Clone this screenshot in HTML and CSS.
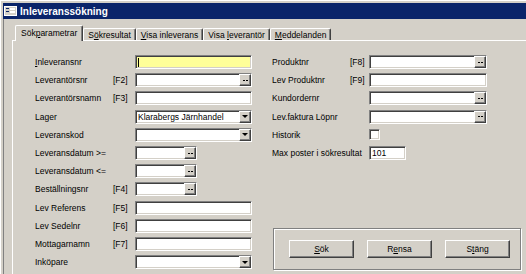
FILE: index.html
```html
<!DOCTYPE html>
<html lang="sv">
<head>
<meta charset="utf-8">
<title>Inleveranssökning</title>
<link rel="stylesheet" href="styles.css">
</head>
<body>
<div class="window">
  <div class="titlebar">
    <svg class="appicon" width="13" height="10" viewBox="0 0 13 10">
      <rect x="0.5" y="0.5" width="12" height="9" fill="#d4d0c8" stroke="#ffffff"/>
      <rect x="2" y="2" width="3" height="1" fill="#0a246a"/>
      <rect x="6" y="2" width="5" height="2" fill="#ffffff"/>
      <rect x="2" y="5" width="3" height="1" fill="#0a246a"/>
      <rect x="6" y="5" width="5" height="2" fill="#ffffff"/>
    </svg>
    <span class="title">Inleveranssökning</span>
  </div>
  <div class="client">
    <div class="tabs">
      <div class="tab active"><span>Sök<u>p</u>arametrar</span></div>
      <div class="tab"><span>S<u>ö</u>kresultat</span></div>
      <div class="tab"><span><u>V</u>isa inleverans</span></div>
      <div class="tab"><span>Visa <u>l</u>everantör</span></div>
      <div class="tab"><span><u>M</u>eddelanden</span></div>
    </div>
    <div class="panel">
      <div class="grid left">
        <span class="lbl"><u>I</u>nleveransnr</span><span class="fkey"></span>
        <div class="fld focus"><span class="caret"></span></div>

        <span class="lbl">Leverantörsnr</span><span class="fkey">[F2]</span>
        <div class="fld"><span class="sb dots"></span></div>

        <span class="lbl">Leverantörsnamn</span><span class="fkey">[F3]</span>
        <div class="fld"></div>

        <span class="lbl">Lager</span><span class="fkey"></span>
        <div class="fld"><span class="val">Klarabergs Järnhandel</span><span class="sb arrow"></span></div>

        <span class="lbl">Leveranskod</span><span class="fkey"></span>
        <div class="fld"><span class="sb arrow"></span></div>

        <span class="lbl">Leveransdatum &gt;=</span><span class="fkey"></span>
        <div class="fld short"><span class="sb dots"></span></div>

        <span class="lbl">Leveransdatum &lt;=</span><span class="fkey"></span>
        <div class="fld short"><span class="sb dots"></span></div>

        <span class="lbl">Beställningsnr</span><span class="fkey">[F4]</span>
        <div class="fld short"><span class="sb dots"></span></div>

        <span class="lbl">Lev Referens</span><span class="fkey">[F5]</span>
        <div class="fld"></div>

        <span class="lbl">Lev Sedelnr</span><span class="fkey">[F6]</span>
        <div class="fld"></div>

        <span class="lbl">Mottagarnamn</span><span class="fkey">[F7]</span>
        <div class="fld"></div>

        <span class="lbl">Inköpare</span><span class="fkey"></span>
        <div class="fld"><span class="sb arrow"></span></div>
      </div>

      <div class="rightcol">
        <div class="grid right">
          <span class="lbl">Produktnr</span><span class="fkey">[F8]</span>
          <div class="fld"><span class="sb dots"></span></div>

          <span class="lbl">Lev Produktnr</span><span class="fkey">[F9]</span>
          <div class="fld"></div>

          <span class="lbl">Kundordernr</span><span class="fkey"></span>
          <div class="fld"><span class="sb dots"></span></div>

          <span class="lbl">Lev.faktura Löpnr</span><span class="fkey"></span>
          <div class="fld"><span class="sb dots"></span></div>

          <span class="lbl">Historik</span><span class="fkey"></span>
          <div class="chk"></div>

          <span class="lbl">Max poster i sökresultat</span><span class="fkey"></span>
          <div class="fld max"><span class="val">101</span></div>
        </div>

        <div class="btnbox">
          <button class="btn" type="button"><u>S</u>ök</button>
          <button class="btn" type="button">R<u>e</u>nsa</button>
          <button class="btn" type="button">S<u>t</u>äng</button>
        </div>
      </div>
    </div>
  </div>
</div>
</body>
</html>
```

FILE: styles.css
```css
* {
  box-sizing: border-box;
}

html,
body {
  margin: 0;
  padding: 0;
}

body {
  width: 526px;
  height: 274px;
  overflow: hidden;
  background: #d4d0c8;
  font-family: "Liberation Sans", Arial, sans-serif;
  font-size: 8.5px;
  color: #000;
}

.window {
  width: 526px;
  height: 274px;
  overflow: hidden;
  padding: 3px 0 0 3px;
  background: #d4d0c8;
  box-shadow: inset 1px 1px #ffffff;
  display: flex;
  flex-direction: column;
}

.titlebar {
  flex: none;
  height: 16px;
  background: #0a246a;
  display: flex;
  align-items: center;
  padding-left: 1px;
  color: #ffffff;
}

.appicon {
  flex: none;
  margin-right: 3px;
}

.title {
  font-weight: bold;
  font-size: 10px;
}

.client {
  flex: 1;
  min-height: 0;
  border-left: 1px solid #808080;
  padding-left: 8px;
  display: flex;
  flex-direction: column;
}

.tabs {
  flex: none;
  height: 21px;
  display: flex;
  align-items: flex-end;
  padding-left: 3px;
}

.tab {
  height: 12px;
  padding: 0 4px;
  display: flex;
  align-items: center;
  white-space: nowrap;
  border-left: 1px solid #ffffff;
  border-top: 1px solid #ffffff;
  border-right: 1px solid #404040;
  border-top-left-radius: 2px;
  border-top-right-radius: 2px;
  box-shadow: inset -1px 0 #808080;
  background: #d4d0c8;
}

.tab.active {
  height: 16px;
  margin-bottom: -1px;
  padding: 0 5px 1px;
  position: relative;
  z-index: 1;
}

.panel {
  flex: 1;
  min-height: 0;
  border-top: 1px solid #ffffff;
  border-left: 1px solid #ffffff;
  padding: 12px 0 0 22px;
  display: flex;
  gap: 20px;
}

.grid {
  display: grid;
  grid-auto-rows: 18.2px;
  align-items: center;
}

.grid.left {
  grid-template-columns: 78px 22px 117px;
}

.grid.right {
  grid-template-columns: 78px 19px 118px;
}

.lbl,
.fkey {
  white-space: nowrap;
}

.fld {
  height: 14px;
  width: 100%;
  background: #ffffff;
  border: 1px solid;
  border-color: #808080 #ffffff #ffffff #808080;
  box-shadow: inset 1px 1px #404040, inset -1px -1px #d4d0c8;
  display: flex;
  align-items: center;
}

.fld.focus {
  background: #ffff99;
}

.fld.short {
  width: 62px;
}

.fld.max {
  width: 37px;
}

.caret {
  width: 1px;
  height: 9px;
  background: #000;
  margin-left: 2px;
}

.val {
  padding-left: 2px;
  white-space: nowrap;
}

.sb {
  flex: none;
  margin-left: auto;
  width: 12px;
  height: 12px;
  background: #d4d0c8;
  border: 1px solid;
  border-color: #ffffff #404040 #404040 #ffffff;
  box-shadow: inset -1px -1px #808080;
  display: flex;
  align-items: center;
  justify-content: center;
}

.sb.dots::after {
  content: "";
  width: 5px;
  height: 1px;
  background: linear-gradient(to right, #000 0 2px, transparent 2px 3px, #000 3px 5px);
}

.sb.arrow::after {
  content: "";
  border-left: 3px solid transparent;
  border-right: 3px solid transparent;
  border-top: 3px solid #000;
}

.chk {
  width: 11px;
  height: 11px;
  background: #ffffff;
  border: 1px solid;
  border-color: #808080 #ffffff #ffffff #808080;
  box-shadow: inset 1px 1px #404040, inset -1px -1px #d4d0c8;
}

.rightcol {
  display: flex;
  flex-direction: column;
}

.btnbox {
  margin-top: 66px;
  margin-left: 1px;
  width: 248px;
  height: 42px;
  border: 1px solid #808080;
  box-shadow: inset 1px 1px #ffffff, 1px 1px #ffffff;
  padding: 11px 0 0 15px;
  display: flex;
  gap: 13px;
}

.btn {
  width: 65px;
  height: 18px;
  padding: 0;
  font: inherit;
  color: #000;
  background: #d4d0c8;
  border: 1px solid;
  border-color: #ffffff #404040 #404040 #ffffff;
  box-shadow: inset -1px -1px #808080;
}
```
